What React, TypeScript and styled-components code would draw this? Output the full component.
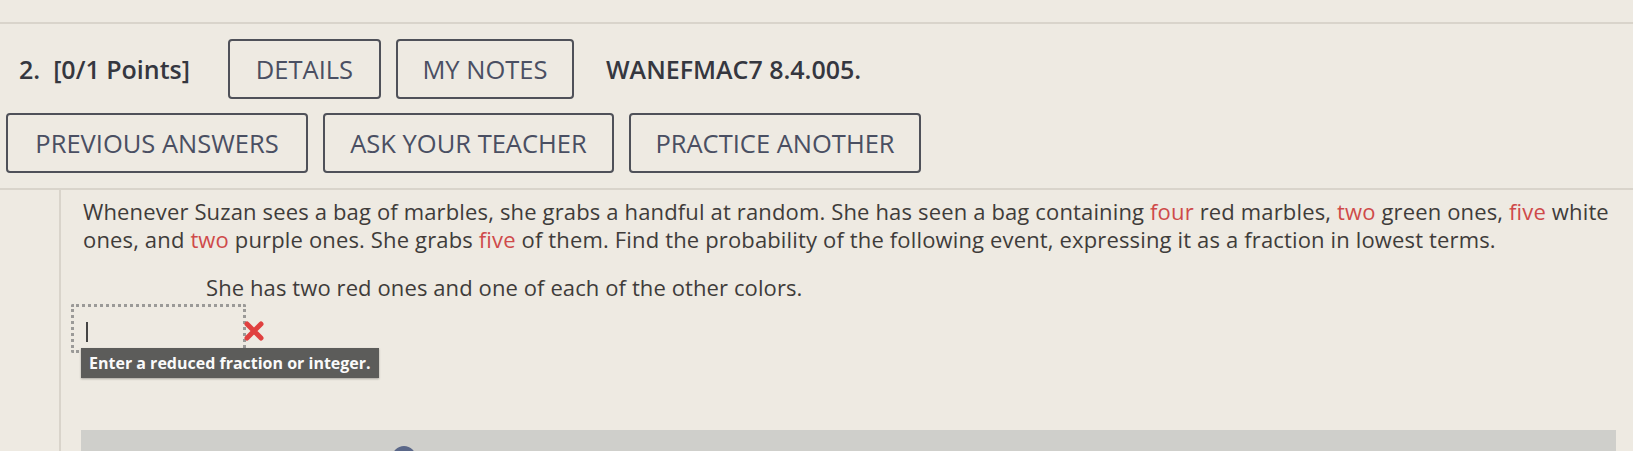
import React from "react";
import styled, { createGlobalStyle } from "styled-components";

const Global = createGlobalStyle`
  html, body { margin: 0; padding: 0; }
  body {
    background: #eeeae2;
    font-family: "Open Sans", "Liberation Sans", sans-serif;
    color: #3f3c3a;
    overflow: hidden;
  }
`;

const Page = styled.div`
  width: 1633px;
  height: 451px;
  overflow: hidden;
`;

const TopStrip = styled.div`
  height: 22px;
  border-bottom: 2px solid #d9d4cb;
`;

const Header = styled.div`
  display: flex;
  flex-direction: column;
  gap: 14px;
  padding: 15px 0 15px 6px;
  border-bottom: 2px solid #d9d4cb;
`;

const Row = styled.div`
  display: flex;
  align-items: center;
  gap: 15px;
`;

const Label = styled.span<{ $ml?: number; $mr?: number }>`
  font-weight: 600;
  font-size: 25px;
  color: #35373f;
  margin-left: ${(p) => p.$ml ?? 0}px;
  margin-right: ${(p) => p.$mr ?? 0}px;
  white-space: nowrap;
`;

const Button = styled.button<{ $w: number }>`
  width: ${(p) => p.$w}px;
  height: 60px;
  box-sizing: border-box;
  border: 2px solid #4f5159;
  border-radius: 4px;
  background: transparent;
  font-family: "Open Sans", "Liberation Sans", sans-serif;
  font-size: 25.5px;
  color: #4a4f62;
  padding: 0;
  white-space: nowrap;
`;

const Body = styled.div`
  display: flex;
  height: 300px;
`;

const Gutter = styled.div`
  width: 59px;
  flex-shrink: 0;
  border-right: 2px solid #d9d4cb;
`;

const Content = styled.div`
  flex: 1;
  padding: 7px 0 0 22px;
  display: flex;
  flex-direction: column;
`;

const Para = styled.p`
  margin: 0;
  font-size: 22px;
  letter-spacing: 0.15px;
  line-height: 28px;
  color: #3f3c3a;
  white-space: nowrap;
`;

const Red = styled.span`
  color: #cf4a4a;
`;

const Event = styled.p`
  margin: 20px 0 0 123px;
  font-size: 22px;
  letter-spacing: 0.1px;
  line-height: 28px;
`;

const AnswerArea = styled.div`
  position: relative;
  margin: 3px 0 0 -12px;
  height: 126px;
`;

const Dotted = styled.div`
  width: 175px;
  height: 49px;
  box-sizing: border-box;
  border: 3px dotted #9b9a98;
  border-radius: 2px;
  display: flex;
  align-items: center;
  padding-left: 12px;
`;

const Caret = styled.div`
  width: 2px;
  height: 20px;
  background: #444;
  margin-top: 6px;
`;

const Wrong = styled.svg`
  position: absolute;
  left: 171px;
  top: 15px;
`;

const Tip = styled.div`
  position: absolute;
  left: 10px;
  top: 44px;
  height: 30px;
  padding: 0 8px;
  background: #5c5c5a;
  color: #fafafa;
  font-weight: 700;
  font-size: 16px;
  line-height: 30px;
  white-space: nowrap;
  box-shadow: 0 1px 2px rgba(0, 0, 0, 0.3);
`;

const Panel = styled.div`
  margin-left: -2px;
  width: 1535px;
  height: 40px;
  background: #cfcfcb;
  display: flex;
  align-items: flex-start;
  gap: 90px;
  padding: 18px 0 0 20px;
  box-sizing: border-box;
`;

const PanelTitle = styled.span`
  font-weight: 700;
  font-size: 20px;
  color: #3a3a3a;
`;

const InfoDot = styled.span`
  width: 24px;
  height: 24px;
  border-radius: 50%;
  background: #5a6788;
  margin-top: -2px;
`;

export default function App() {
  return (
    <Page>
      <Global />
      <TopStrip />
      <Header>
        <Row>
          <Label $ml={13} $mr={23}>2.&nbsp; [0/1 Points]</Label>
          <Button $w={153}>DETAILS</Button>
          <Button $w={178}>MY NOTES</Button>
          <Label $ml={17}>WANEFMAC7 8.4.005.</Label>
        </Row>
        <Row>
          <Button $w={302}>PREVIOUS ANSWERS</Button>
          <Button $w={291}>ASK YOUR TEACHER</Button>
          <Button $w={292}>PRACTICE ANOTHER</Button>
        </Row>
      </Header>
      <Body>
        <Gutter />
        <Content>
          <Para>
            Whenever Suzan sees a bag of marbles, she grabs a handful at random. She has seen a bag
            containing <Red>four</Red> red marbles, <Red>two</Red> green ones, <Red>five</Red> white
            <br />
            ones, and <Red>two</Red> purple ones. She grabs <Red>five</Red> of them. Find the
            probability of the following event, expressing it as a fraction in lowest terms.
          </Para>
          <Event>She has two red ones and one of each of the other colors.</Event>
          <AnswerArea>
            <Dotted>
              <Caret />
            </Dotted>
            <Wrong width="24" height="24" viewBox="0 0 24 24">
              <path d="M5 5 L19 19 M19 5 L5 19" stroke="#e0403f" strokeWidth="5" strokeLinecap="round" />
            </Wrong>
            <Tip>Enter a reduced fraction or integer.</Tip>
          </AnswerArea>
          <Panel>
            <PanelTitle>Viewing Saved Work</PanelTitle>
            <InfoDot />
          </Panel>
        </Content>
      </Body>
    </Page>
  );
}
